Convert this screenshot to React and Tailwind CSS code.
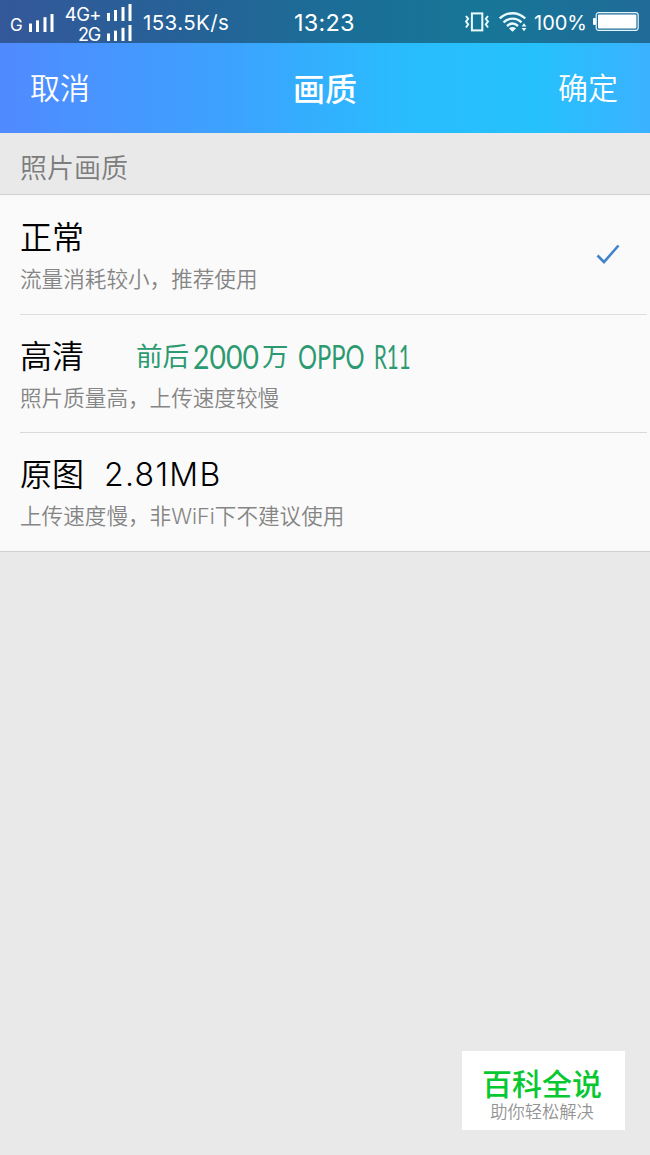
const options = [
  {
    id: "normal",
    title: "正常",
    description: "流量消耗较小，推荐使用",
    rowClass: "h-[120px] pt-0.5 border-b border-[#dedede]",
  },
  {
    id: "hd",
    title: "高清",
    description: "照片质量高，上传速度较慢",
    promo: true,
    rowClass: "h-[118px] pt-0.5 border-b border-[#d9d9d9]",
  },
  {
    id: "original",
    title: "原图",
    size: "2.81MB",
    description: "上传速度慢，非WiFi下不建议使用",
    rowClass: "h-[118px]",
  },
];

function SignalBars({ className }) {
  return (
    <svg className={className} viewBox="0 0 25 17" fill="#fff" preserveAspectRatio="none">
      <rect x="0" y="9" width="3" height="8" />
      <rect x="7" y="6" width="3" height="11" />
      <rect x="14.5" y="3" width="3" height="14" />
      <rect x="21.5" y="0" width="3" height="17" />
    </svg>
  );
}

function VibrateIcon() {
  return (
    <svg className="w-6 h-5 shrink-0" viewBox="0 0 24 20" fill="none" stroke="#eafcff">
      <rect x="6.9" y="1.4" width="10.4" height="17" strokeWidth="2" />
      <path d="M1 4l2.2 2.8L1 9.6l2.2 2.8L1 15.5M23 4l-2.2 2.8L23 9.6l-2.2 2.8 2.2 3.1" strokeWidth="1.9" />
    </svg>
  );
}

function WifiIcon() {
  return (
    <svg className="w-7 h-5 shrink-0" viewBox="0 0 28 20" fill="none" stroke="#eafcff" strokeWidth="2.4">
      <path d="M.8 6.5C8-.5 19-.5 26.2 6.5" />
      <path d="M4.5 10.4c5.3-5 12.7-5 18 0" />
      <path d="M8 14c3.4-3 7.6-3 11 0" />
      <path d="M10 16.4c2-1.8 5-1.8 7 0L13.5 19.7z" fill="#eafcff" stroke="none" />
      <path d="M25 11.3l2.4 3.2h-4.8zM25 19.3l2.4-3.2h-4.8z" fill="#eafcff" stroke="none" />
    </svg>
  );
}

function BatteryIcon() {
  return (
    <svg className="w-[46px] h-[19px] shrink-0" viewBox="0 0 46 19">
      <rect x="0" y="6" width="3" height="7" rx="1" fill="#fff" />
      <rect x="3.2" y="0.7" width="42" height="17.6" rx="2.5" fill="none" stroke="#e5f6fb" strokeWidth="1.2" />
      <rect x="5" y="2.5" width="38.4" height="14" rx="1" fill="#fff" />
    </svg>
  );
}

function StatusBar() {
  return (
    <div className="h-[43px] flex text-white bg-[linear-gradient(90deg,#34589a_0%,#256296_30%,#1a6f97_55%,#177698_75%,#206b98_100%)]">
      <div className="w-[55px] pl-2.5 flex items-start gap-1.5">
        <span className="w-[13px] mt-[15px] text-[17px] leading-5">G</span>
        <SignalBars className="mt-3.5 w-[25px] h-[18px]" />
      </div>
      <div className="w-[77px] pt-1 flex flex-col">
        <div className="flex justify-end items-start h-[21px] gap-1.5">
          <span className="text-[18.5px] leading-5 tracking-[-0.6px]">4G+</span>
          <SignalBars className="w-[25px] h-[17px]" />
        </div>
        <div className="flex justify-end items-start h-[18px] gap-[7px]">
          <span className="text-[18px] leading-5 tracking-[-1.2px]">2G</span>
          <SignalBars className="w-[25px] h-[16px]" />
        </div>
      </div>
      <span className="w-[152px] pl-[11px] pt-[9px] text-[20.5px] leading-7 tracking-[0.4px]">153.5K/s</span>
      <span className="w-[181px] pl-[10px] pt-[9px] text-[23.5px] leading-7 tracking-[0.2px]">13:23</span>
      <div className="pt-3 flex items-start">
        <VibrateIcon />
        <span className="w-[10px]" />
        <WifiIcon />
        <span className="w-[59px] ml-[7px] -mt-[3px] text-[20px] leading-7">100%</span>
        <BatteryIcon />
      </div>
    </div>
  );
}

function PromoText() {
  return (
    <div className="ml-[52px] pb-0.5 flex items-center text-[#2c9a70] whitespace-nowrap font-normal">
      <span className="w-[57px] text-[26.5px]">前后</span>
      <span className="w-[69px] font-[Lato] text-[33px]">
        <span className="inline-block origin-left scale-x-[0.86]">2000</span>
      </span>
      <span className="w-9 text-[26.5px]">万</span>
      <span className="w-[76px] font-[Lato] text-[33px]">
        <span className="inline-block origin-left scale-x-[0.72]">OPPO</span>
      </span>
      <span className="font-[Lato] text-[33px]">
        <span className="inline-block origin-left scale-x-[0.62]">R11</span>
      </span>
    </div>
  );
}

function OptionRow({ option, selected }) {
  return (
    <div className="pl-5 pr-[3px]">
      <div className={`flex items-center ${option.rowClass}`}>
        <div className="flex-1 flex flex-col gap-[7px]">
          <div className="h-10 flex items-center text-[32px] text-black leading-10 font-[350]">
            <span>{option.title}</span>
            {option.size && <span className="ml-5 tracking-[1.3px]">{option.size}</span>}
            {option.promo && <PromoText />}
          </div>
          <div className="h-7 text-[21.6px] leading-7 text-[#858585] font-[350]">
            {option.description}
          </div>
        </div>
        {selected && (
          <svg className="w-6 h-5 mr-[27px] mb-1" viewBox="0 0 24 20" fill="none" stroke="#4284cb" strokeWidth="2.6">
            <path d="M1.5 11.5L8 18 22.5 1.5" />
          </svg>
        )}
      </div>
    </div>
  );
}

export default function App() {
  return (
    <div className="w-[650px] h-[1155px] flex flex-col bg-[#e9e9e9] font-[Inter,'Noto_Sans_CJK_SC',sans-serif] overflow-hidden">
      <StatusBar />
      <header className="h-[90px] pl-[30px] pr-8 grid grid-cols-3 items-center text-[30px] text-white bg-[linear-gradient(90deg,#508aff_0%,#3da2ff_35%,#29bcfd_62%,#25c1fc_82%,#3bb2ff_100%)]">
        <button className="text-left font-[350]">取消</button>
        <h1 className="pt-1 pl-0.5 text-center text-[32px] font-medium">画质</h1>
        <button className="text-right font-[350]">确定</button>
      </header>

      <div className="h-[62px] pl-5 pt-3 flex items-center text-[27px] text-[#7d7d7d] font-[350] border-b border-[#cfcfcf]">
        照片画质
      </div>
      <main className="bg-[#fafafa] border-b border-[#cfcfcf]">
        {options.map((option) => (
          <OptionRow
            key={option.id}
            option={option}
            selected={option.id === "normal"}
          />
        ))}
      </main>

      <div className="mt-auto mb-[25px] mr-[25px] self-end w-[163px] h-[79px] bg-white flex flex-col items-center pt-[15px] pr-[3px]">
        <div className="text-[30px] leading-9 font-medium text-[#08c832]">百科全说</div>
        <div className="text-[17.3px] leading-5 text-[#949494] font-[350]">助你轻松解决</div>
      </div>
    </div>
  );
}
